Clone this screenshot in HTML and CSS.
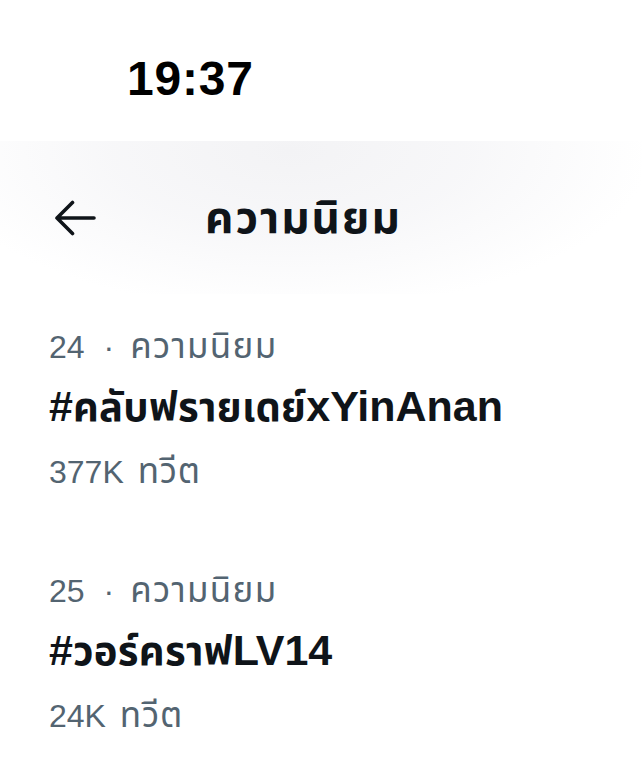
FILE: index.html
```html
<!DOCTYPE html>
<html lang="th">
<head>
<meta charset="utf-8">
<link rel="stylesheet" href="styles.css">
</head>
<body>
<div class="status"><span class="time">19:37</span></div>
<header class="header">
  <svg class="back" viewBox="0 0 42 36" width="42" height="36"><path d="M40 18H3M18.5 2.5L3 18l15.5 15.5" fill="none" stroke="#0f1419" stroke-width="3.6" stroke-linecap="round" stroke-linejoin="round"/></svg>
  <h1 class="title">ความนิยม</h1>
</header>
<main class="list">
  <section class="trend">
    <div class="meta">24<span class="dot">·</span><span class="th">ความนิยม</span></div>
    <div class="name">#<span class="th">คลับฟรายเดย์</span>xYinAnan</div>
    <div class="count">377K <span class="th th-count">ทวีต</span></div>
  </section>
  <section class="trend">
    <div class="meta">25<span class="dot">·</span><span class="th">ความนิยม</span></div>
    <div class="name">#<span class="th">วอร์คราฟ</span>LV14</div>
    <div class="count">24K <span class="th th-count">ทวีต</span></div>
  </section>
</main>
</body>
</html>
```
FILE: styles.css
```css
html, body {
  margin: 0;
  padding: 0;
  background: #ffffff;
}
body {
  width: 642px;
  height: 769px;
  overflow: hidden;
  font-family: "Liberation Sans", "Noto Sans Thai", "Noto Sans", sans-serif;
  color: #0f1419;
}
.status {
  height: 141px;
  box-sizing: border-box;
  padding: 49px 0 0 127px;
}
.time {
  display: block;
  font-size: 48px;
  font-weight: 700;
  line-height: 60px;
  letter-spacing: 0.8px;
  color: #000;
}
.header {
  height: 153px;
  display: flex;
  align-items: center;
  padding-left: 54px;
  box-sizing: border-box;
  background:
    radial-gradient(ellipse 360px 160px at 290px 10px, rgba(243,243,245,1) 0%, rgba(246,246,248,0.85) 50%, rgba(255,255,255,0) 100%);
}
.back {
  display: block;
  flex: none;
}
.title {
  margin: 0 0 0 109px;
  font-size: 44px;
  font-weight: 700;
  line-height: 50px;
  letter-spacing: 2px;
  color: #0f1419;
}
.list {
  display: flex;
  flex-direction: column;
  gap: 79px;
  padding: 33px 0 0 49px;
}
.trend {
  display: flex;
  flex-direction: column;
}
.th {
  line-height: 0;
}
.meta, .count {
  color: #536471;
  font-size: 32px;
  line-height: 40px;
  height: 40px;
}
.meta .th {
  font-size: 35px;
  letter-spacing: 1.3px;
}
.dot {
  margin: 0 16px 0 19px;
}
.count .th-count {
  font-size: 35px;
  letter-spacing: 0.8px;
  margin-left: 5px;
}
.meta {
  margin-bottom: 14px;
}
.name {
  font-size: 43px;
  font-weight: 700;
  line-height: 50px;
  height: 50px;
  margin-bottom: 21px;
  white-space: nowrap;
}
.name .th {
  font-size: 40px;
  letter-spacing: 0.3px;
}
```
